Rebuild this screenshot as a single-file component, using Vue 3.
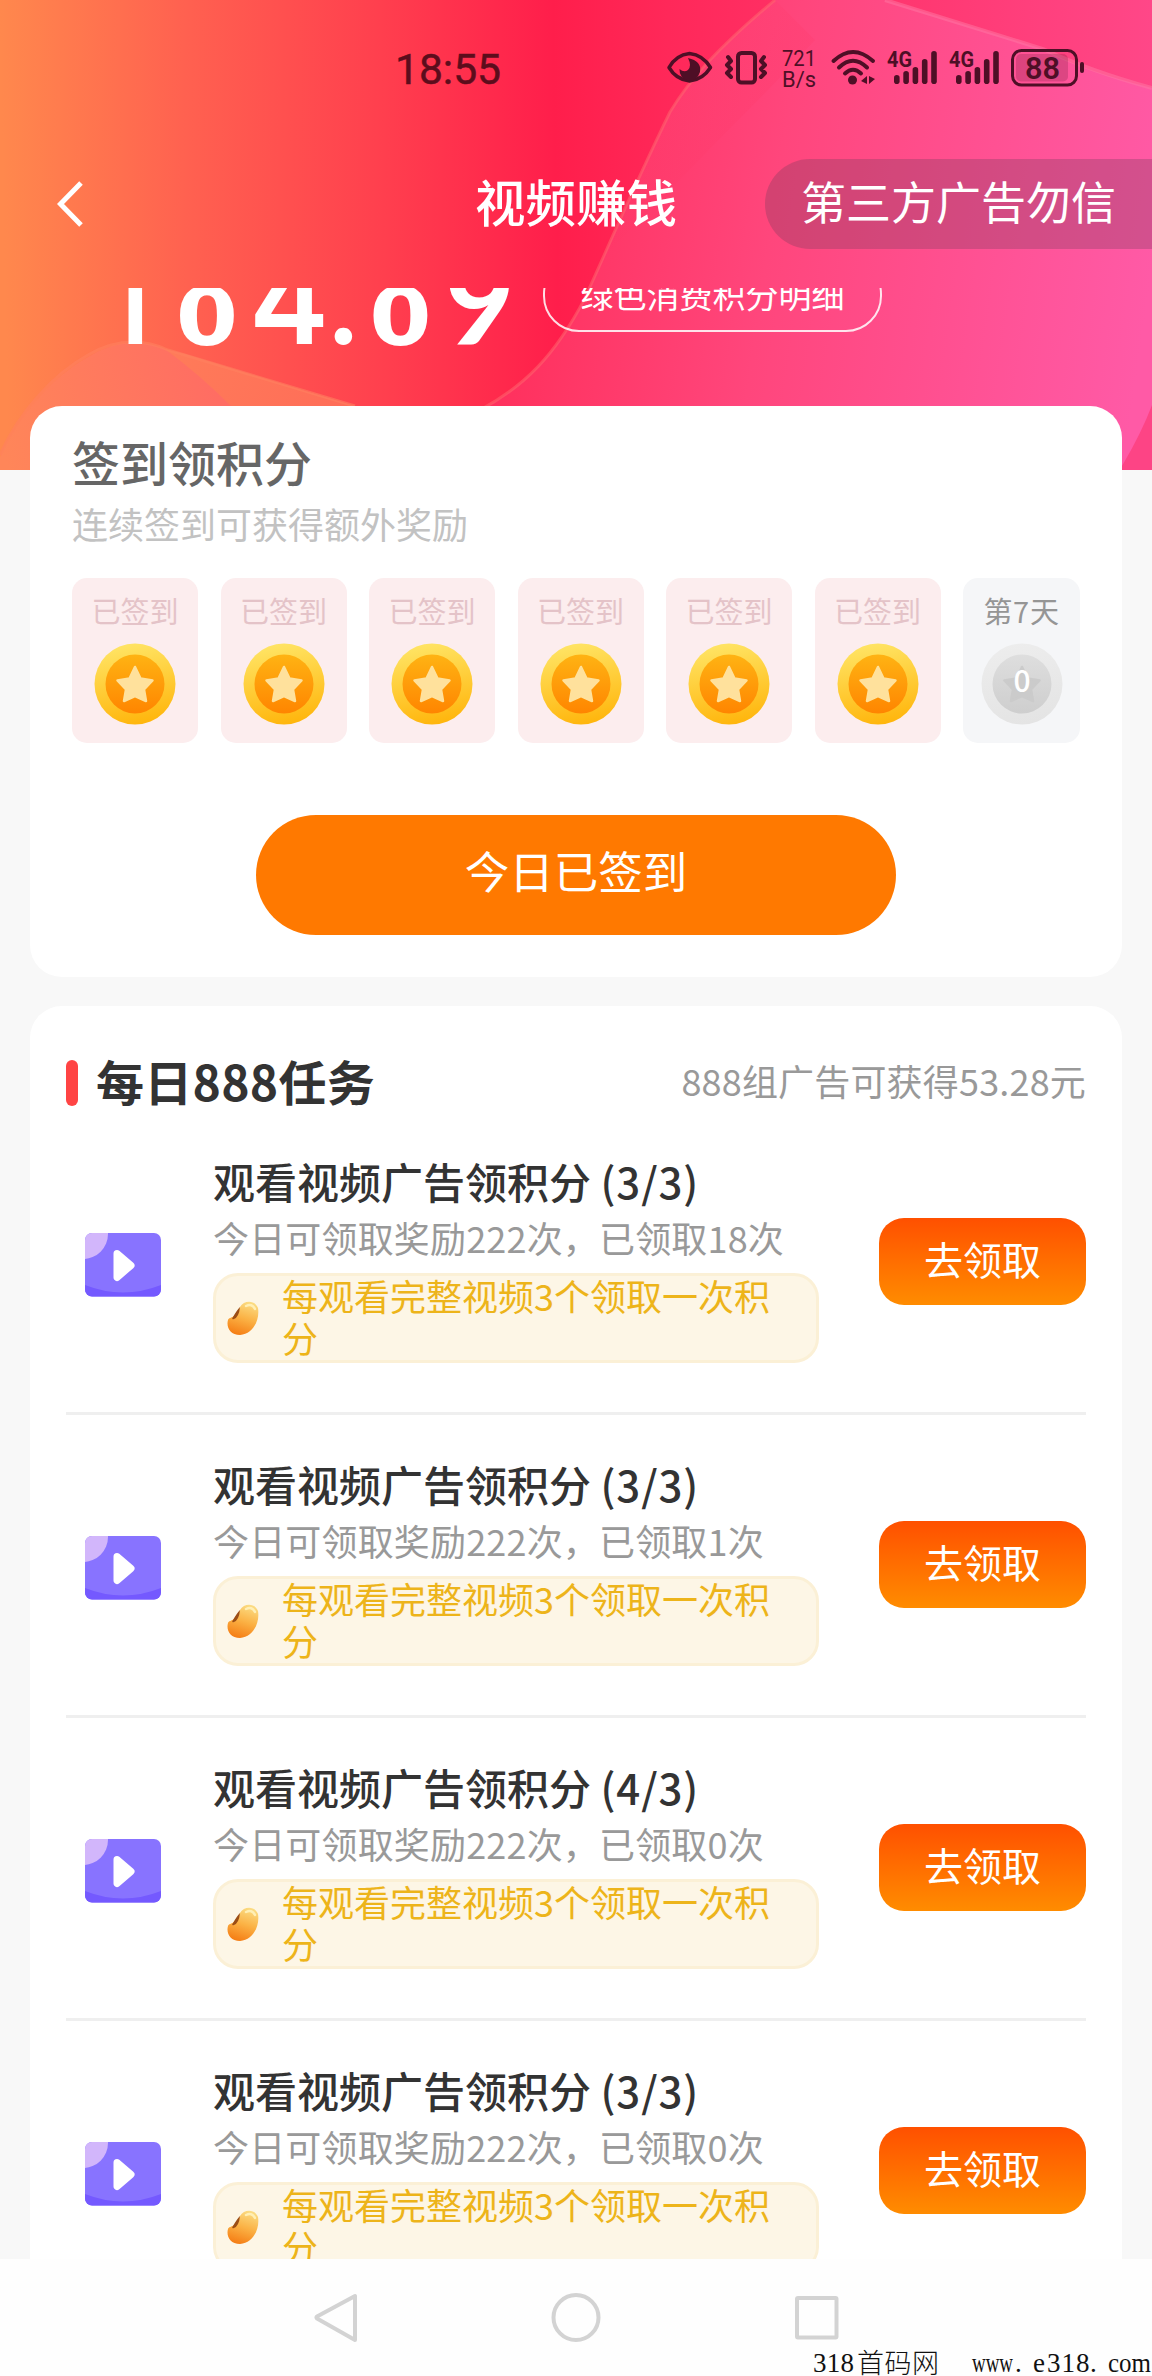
<script setup>
const days = [1, 2, 3, 4, 5, 6, 7].map((n) => ({
  n,
  signed: n < 7,
  label: n < 7 ? '已签到' : `第${n}天`,
}))

const tasks = [
  { id: 1, progress: '(3/3)', claimed: 18 },
  { id: 2, progress: '(3/3)', claimed: 1 },
  { id: 3, progress: '(4/3)', claimed: 0 },
  { id: 4, progress: '(3/3)', claimed: 0 },
]

const bars = [
  { x: 0, y: 24 },
  { x: 9.3, y: 20 },
  { x: 18.6, y: 16 },
  { x: 27.9, y: 8 },
  { x: 37.2, y: 0 },
]
</script>

<template>
  <div class="screen">
    <svg class="backdrop" viewBox="0 0 1152 470" width="1152" height="470">
      <defs>
        <linearGradient id="base" gradientUnits="userSpaceOnUse" x1="0" y1="20" x2="1152" y2="0">
          <stop offset="0" stop-color="#ff884d" />
          <stop offset="0.16" stop-color="#ff6150" />
          <stop offset="0.33" stop-color="#ff3f4e" />
          <stop offset="0.48" stop-color="#ff1e4b" />
          <stop offset="0.58" stop-color="#ff2859" />
          <stop offset="1" stop-color="#ff4788" />
        </linearGradient>
        <linearGradient id="petal" gradientUnits="userSpaceOnUse" x1="520" y1="180" x2="1152" y2="270">
          <stop offset="0" stop-color="#ff305c" />
          <stop offset="0.4" stop-color="#ff467c" />
          <stop offset="1" stop-color="#ff5aa6" />
        </linearGradient>
        <linearGradient id="fold" gradientUnits="userSpaceOnUse" x1="640" y1="150" x2="730" y2="190">
          <stop offset="0" stop-color="#ff2c56" stop-opacity="0" />
          <stop offset="1" stop-color="#ff2c56" stop-opacity="0.12" />
        </linearGradient>
        <linearGradient id="wave" gradientUnits="userSpaceOnUse" x1="0" y1="440" x2="240" y2="380">
          <stop offset="0" stop-color="#ff8659" />
          <stop offset="1" stop-color="#ff6a64" />
        </linearGradient>
        <linearGradient id="wave2" gradientUnits="userSpaceOnUse" x1="170" y1="360" x2="350" y2="425">
          <stop offset="0" stop-color="#ff7b59" />
          <stop offset="1" stop-color="#ff6c58" />
        </linearGradient>
      </defs>
      <rect width="1152" height="470" fill="url(#base)" />
      <path d="M775 0C715 50 688 82 670 112C632 190 615 232 584 300C555 355 525 386 480 410L480 470H1152V88Q1080 70 1043 49L885 0Z" fill="url(#petal)" />
      <path d="M775 0C715 50 688 82 670 112C632 190 615 232 584 300L612 248L770 88L815 40Z" fill="url(#fold)" />
      <path d="M775 0C715 50 688 82 670 112C632 190 615 232 584 300C555 355 525 386 480 410" fill="none" stroke="#ff6a70" stroke-opacity="0.5" stroke-width="3" />
      <path d="M885 0L1043 49Q1090 71 1152 88" fill="none" stroke="#ff78a4" stroke-opacity="0.5" stroke-width="4" />
      <path d="M1152 405Q1142 432 1122 466V470H1152Z" fill="#fd4485" />
      <path d="M0 457C18 416 52 377 88 357Q128 332 168 350L355 406V470H0Z" fill="url(#wave)" />
      <path d="M165 349Q200 375 232 407H357L185 354Z" fill="url(#wave2)" />
      <path d="M0 455C18 414 52 375 88 355Q128 332 168 350L355 406" fill="none" stroke="#ff805f" stroke-opacity="0.6" stroke-width="3" />
    </svg>

    <header class="top">
      <svg class="status" viewBox="0 0 1152 110" width="1152" height="110" fill="#4e0f26">
        <text x="395" y="84" font-size="43" textLength="106" lengthAdjust="spacingAndGlyphs" fill="#5c0d1c" stroke="#5c0d1c" stroke-width="0.500">18:55</text>
        <path d="M669 67.500Q676 55 689.500 53.500Q703 55 710.500 67.500Q703 79.500 689.500 81Q676 79.500 669 67.500Z" fill="none" stroke="#4e0f26" stroke-width="3.500" stroke-linejoin="round" />
        <path d="M688 58Q702 61 700 72Q697 81 689 81Q679 78 679.500 69Q684 73 688 70Q692 66 688 58Z" />
        <rect x="738" y="53" width="17" height="29.500" rx="3.500" fill="none" stroke="#4e0f26" stroke-width="4" />
        <path d="M728 57l3 4-4 4 4 4-4 4 4 4M764 57l-3 4 4 4-4 4 4 4-4 4" fill="none" stroke="#4e0f26" stroke-width="4" stroke-linejoin="round" stroke-linecap="round" />
        <text x="782" y="66" font-size="22.500" textLength="34" lengthAdjust="spacingAndGlyphs">721</text>
        <text x="782" y="87" font-size="22.500" textLength="34" lengthAdjust="spacingAndGlyphs">B/s</text>
        <g fill="none" stroke="#4e0f26" stroke-width="4" stroke-linecap="round">
          <path d="M833.500 61Q853 43 873 61" />
          <path d="M839 67.500Q853 54 867 67.500" />
          <path d="M845 73.500Q853 66 861 73.500" />
        </g>
        <circle cx="852.500" cy="80" r="4.500" />
        <path d="M861 81l6-5v8zM869 76v8l6-5z" />
        <g v-for="offset in [0, 62]" :key="offset" :transform="`translate(${offset} 0)`">
          <text x="887" y="67" font-size="21.500" font-weight="700" textLength="25" lengthAdjust="spacingAndGlyphs">4G</text>
          <rect v-for="bar in bars" :key="bar.x" :x="894 + bar.x" :y="51 + bar.y" width="5.600" :height="33 - bar.y" rx="2.800" />
        </g>
        <rect x="1012.500" y="50.500" width="64" height="34.500" rx="9" fill="none" stroke="#4e0f26" stroke-width="3" />
        <rect x="1016" y="54" width="52" height="27.500" rx="5" fill-opacity="0.2" />
        <rect x="1080" y="62" width="4" height="11" rx="2" />
        <text x="1025" y="79" font-size="31" font-weight="600" textLength="35" lengthAdjust="spacingAndGlyphs">88</text>
      </svg>
      <nav class="titlebar">
        <svg class="back" viewBox="0 0 30 50" width="30" height="50">
          <path d="M26 4L5.500 25L26 46" fill="none" stroke="#fff" stroke-width="5" />
        </svg>
        <h1>视频赚钱</h1>
        <div class="warn">第三方广告勿信</div>
      </nav>
    </header>

    <main class="scroll">
      <section class="balance">
        <svg class="amount" viewBox="0 0 543 118" width="543" height="118">
          <text x="152" y="56" text-anchor="end" font-size="122" font-weight="500">1</text>
          <text class="round" transform="translate(207 57) scale(1.12 1)" text-anchor="middle" font-size="80" font-weight="700">0</text>
          <text x="289" y="56" text-anchor="middle" font-size="122" font-weight="600" textLength="80" lengthAdjust="spacingAndGlyphs">4</text>
          <text class="dot" x="343.500" y="56" text-anchor="middle" font-size="115" font-weight="700">.</text>
          <text class="round" transform="translate(400.500 57) scale(1.12 1)" text-anchor="middle" font-size="80" font-weight="700">0</text>
          <text class="dot" x="480" y="56" text-anchor="middle" font-size="122" font-weight="700">9</text>
        </svg>
        <div class="detail">绿色消费积分明细</div>
      </section>

      <section class="card checkin">
        <h2>签到领积分</h2>
        <p class="hint">连续签到可获得额外奖励</p>
        <ul class="days">
          <li v-for="day in days" :key="day.n" :class="{ pending: !day.signed }">
            <span>{{ day.label }}</span>
            <svg viewBox="0 0 82 82" width="82" height="82">
              <defs>
                <linearGradient :id="`rim${day.n}`" x1="0.300" y1="0" x2="0.500" y2="1">
                  <stop offset="0" :stop-color="day.signed ? '#ffe566' : '#ededed'" />
                  <stop offset="1" :stop-color="day.signed ? '#ffb60d' : '#e4e4e4'" />
                </linearGradient>
                <linearGradient :id="`core${day.n}`" x1="0" y1="0" x2="0" y2="1">
                  <stop offset="0" :stop-color="day.signed ? '#ffb313' : '#dedede'" />
                  <stop offset="1" :stop-color="day.signed ? '#ff8500' : '#cecece'" />
                </linearGradient>
              </defs>
              <circle cx="41" cy="41" r="40.500" :fill="`url(#rim${day.n})`" />
              <circle cx="41" cy="41" r="29.500" :fill="`url(#core${day.n})`" />
              <path d="M41 24L46.500 35.500L58.500 37.500L50 46.500L52 58L41 53L30 58L32 46.500L23.500 37.500L35.500 35.500Z" :fill="day.signed ? '#ffe19c' : '#cbcbcb'" :stroke="day.signed ? '#ffe19c' : '#cbcbcb'" stroke-width="2.500" stroke-linejoin="round" />
              <text v-if="!day.signed" x="41" y="49" text-anchor="middle" font-size="30" font-weight="500" fill="#fff">0</text>
            </svg>
          </li>
        </ul>
        <button class="signed">今日已签到</button>
      </section>

      <section class="card tasks">
        <div class="tasks-head">
          <i></i>
          <h2>每日888任务</h2>
          <span>888组广告可获得53.28元</span>
        </div>
        <article v-for="task in tasks" :key="task.id" class="task">
          <svg class="video" viewBox="0 0 76 64" width="76" height="64">
            <defs>
              <clipPath :id="`tile${task.id}`"><rect width="76" height="63.500" rx="7" /></clipPath>
            </defs>
            <g :clip-path="`url(#tile${task.id})`">
              <rect width="76" height="64" fill="#8873ff" />
              <circle cx="-2" cy="1" r="25" fill="#d2b6fb" />
              <path d="M0 52Q38 67 76 52V64H0Z" fill="#7459ff" />
            </g>
            <path d="M32 20.500L46 32.500L32 44.500Z" fill="#fff" stroke="#fff" stroke-width="7" stroke-linejoin="round" />
          </svg>
          <div class="info">
            <h3>观看视频广告领积分 <span>{{ task.progress }}</span></h3>
            <p>今日可领取奖励222次，已领取{{ task.claimed }}次</p>
            <div class="tip">
              <svg viewBox="0 0 34 36" width="34" height="36">
                <defs>
                  <linearGradient :id="`bean${task.id}`" x1="0.700" y1="0" x2="0.400" y2="1">
                    <stop offset="0" stop-color="#fbdc83" />
                    <stop offset="0.500" stop-color="#fbb245" />
                    <stop offset="1" stop-color="#f57f16" />
                  </linearGradient>
                </defs>
                <path d="M14 7C18 0 29 0 32 8C34 20 27 34 14 35C4 35 0 27 2 20C4 16 10 19 14 7Z" :fill="`url(#bean${task.id})`" />
                <path d="M14 7Q11 10 7 17Q5 20 8 19Q13 17 14 7Z" fill="#9b4d15" />
                <path d="M20 6Q26 3 29 9" fill="none" stroke="#ffefb5" stroke-width="2.500" stroke-linecap="round" />
              </svg>
              <span>每观看完整视频3个领取一次积分</span>
            </div>
          </div>
          <button>去领取</button>
        </article>
      </section>
    </main>

    <footer class="navbar">
      <svg viewBox="0 0 1152 117" width="1152" height="117">
        <g fill="none" stroke="#d3d3d3" stroke-width="4" stroke-linejoin="round">
          <path d="M355 37V81L317 59.500Q316 58.500 317 57.500Z" />
          <circle cx="576" cy="58.500" r="22.500" />
          <rect x="797" y="39" width="39.500" height="39.500" rx="1" />
        </g>
        <g class="mark" fill="#111" font-size="27">
          <text x="813" y="113" textLength="41">318</text>
          <text class="cjk" x="857" y="114" font-size="27" textLength="82">首码网</text>
          <text x="972" y="113" textLength="41" lengthAdjust="spacingAndGlyphs">www</text>
          <text x="1015 1033 1047 1061.500 1076 1090" y="113">.e318.</text>
          <text x="1108" y="113" textLength="43" lengthAdjust="spacingAndGlyphs">com</text>
        </g>
      </svg>
    </footer>
  </div>
</template>

<style>
body {
  background: #f8f8f8;
}
</style>

<style scoped>
* {
  box-sizing: border-box;
  margin: 0;
  padding: 0;
}
.screen {
  position: relative;
  display: flex;
  flex-direction: column;
  width: 1152px;
  height: 2376px;
  overflow: hidden;
  background: #f8f8f8;
  font-family: "Noto Sans CJK SC", "Noto Sans", sans-serif;
  font-weight: 400;
}
svg {
  display: block;
  flex: none;
}
.backdrop {
  position: absolute;
  top: 0;
  left: 0;
}
.top {
  position: relative;
  flex: none;
  height: 288px;
}
.status {
  font-family: Roboto, sans-serif;
}
.titlebar {
  display: grid;
  grid-template-columns: 1fr auto 1fr;
  align-items: center;
  height: 188px;
  color: #fff;
}
.back {
  margin-left: 55px;
}
h1 {
  padding-bottom: 9px;
  font-size: 50.500px;
  font-weight: 500;
  line-height: 70px;
}
.warn {
  justify-self: end;
  width: 387px;
  height: 90px;
  padding-left: 36px;
  border-radius: 45px 0 0 45px;
  background: rgba(110, 60, 90, 0.3);
  font-size: 45px;
  line-height: 83px;
}
.status + .titlebar {
  margin-top: 0;
}
.scroll {
  position: relative;
  flex: none;
  height: 1971px;
  overflow: hidden;
}
.balance {
  display: flex;
  height: 118px;
  color: #fff;
}
.amount {
  fill: #fff;
  font-family: Inter, sans-serif;
}
.dot {
  font-family: Lato, sans-serif;
}
.round {
  font-family: "DejaVu Sans", sans-serif;
}
.detail {
  width: 339px;
  height: 74px;
  margin-top: -30px;
  border: 2px solid rgba(255, 255, 255, 0.85);
  border-radius: 36px;
  font-size: 33px;
  line-height: 68px;
  text-align: center;
}
.card {
  margin: 0 30px;
  border-radius: 32px;
  background: #fff;
}
.checkin {
  height: 571px;
  padding: 27px 42px 0;
}
.checkin h2 {
  color: #666;
  font-size: 48px;
  font-weight: 500;
  line-height: 56px;
}
.hint {
  margin-top: 11px;
  color: #c2c2c2;
  font-size: 36px;
  line-height: 46px;
}
.days {
  display: flex;
  justify-content: space-between;
  margin-top: 32px;
  list-style: none;
}
.days li {
  display: flex;
  flex-direction: column;
  align-items: center;
  width: 126px;
  height: 165px;
  border-radius: 15px;
  background: #fcedee;
  color: #e4c3c8;
  font-size: 29px;
  line-height: 40px;
}
.days li span {
  margin: 12px 0 13px;
}
.days li.pending {
  width: 117px;
  background: #f5f6f8;
  color: #959595;
}
.days li.pending span {
  letter-spacing: 0.7px;
}
.signed {
  display: block;
  width: 640px;
  height: 120px;
  margin: 72px auto 0;
  padding-bottom: 10px;
  border: 0;
  border-radius: 60px;
  background: #ff7900;
  color: #fff;
  font: 400 44.500px/100px "Noto Sans CJK SC", sans-serif;
}
.tasks {
  height: 1400px;
  margin-top: 29px;
  padding: 0 36px;
}
.tasks-head {
  display: flex;
  align-items: center;
  height: 104px;
  padding-top: 50px;
}
.tasks-head i {
  width: 12px;
  height: 46px;
  border-radius: 6px;
  background: #ff4444;
}
.tasks-head h2 {
  flex: 1;
  margin-left: 18px;
  padding-bottom: 6px;
  color: #333;
  font-size: 48px;
  font-weight: 700;
  letter-spacing: 0.3px;
  line-height: 48px;
}
.tasks-head span {
  padding-bottom: 6px;
  color: #999;
  font-size: 36px;
  letter-spacing: 0.18px;
  line-height: 46px;
}
.task {
  display: flex;
  height: 303px;
  padding-top: 44px;
  border-bottom: 3px solid #efefef;
}
.task:first-of-type {
  height: 305px;
  padding-top: 46px;
}
.video {
  margin: 77px 52px 0 19px;
}
.info {
  width: 606px;
}
.info h3 {
  color: #333;
  font-size: 42px;
  font-weight: 500;
  line-height: 50px;
  white-space: nowrap;
}
.info h3 span {
  letter-spacing: 0.9px;
}
.info p {
  margin-top: 9px;
  color: #999;
  font-size: 36px;
  letter-spacing: 0.17px;
  line-height: 44px;
  white-space: nowrap;
}
.tip {
  display: flex;
  align-items: center;
  height: 90px;
  margin-top: 14px;
  padding-left: 10px;
  border: 3px solid #fbf0d6;
  border-radius: 25px;
  background: #fdf6e6;
}
.tip span {
  width: 500px;
  margin: -5px 0 0 22px;
  color: #edb41a;
  font-size: 36px;
  line-height: 42px;
}
.task button {
  width: 207px;
  height: 87px;
  margin: 62px 0 0 60px;
  padding-bottom: 7px;
  border: 0;
  border-radius: 25px;
  background: linear-gradient(#ff5000, #ff8c00);
  color: #fff;
  font: 400 39px/74px "Noto Sans CJK SC", sans-serif;
}
.navbar {
  position: relative;
  flex: none;
  height: 117px;
  background: #fefefe;
}
.mark {
  font-family: "Liberation Serif", "Noto Sans CJK SC", serif;
  font-weight: 400;
}
.cjk {
  font-family: "Noto Sans CJK SC", sans-serif;
  font-weight: 300;
}
</style>
